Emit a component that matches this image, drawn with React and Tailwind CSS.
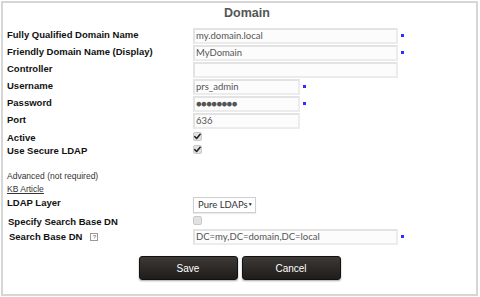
const label = "font-['Liberation_Sans',Arial,sans-serif] font-bold text-[9.5px] leading-[12px] text-[#111]";
const field = "h-[16px] bg-[#fcfcfc] border-2 border-[#e3e3e3] border-r-[#ececec] border-b-[#ececec] px-[1px] flex items-center font-['Lato',sans-serif] text-[9.5px] text-[#555] leading-none whitespace-nowrap";

function Req() {
  return <span className="ml-[3px] mt-[6px] w-[3px] h-[3px] bg-[#2f2fff] inline-block" />;
}

function Check({ on }) {
  return (
    <span className="w-[9px] h-[9px] rounded-[2px] bg-[#e2e2e2] border border-[#c9c9c9] flex items-center justify-center">
      {on && (
        <svg width="7" height="7" viewBox="0 0 8 8">
          <path d="M1 4.2 L3 6.3 L7 1.5" fill="none" stroke="#222" strokeWidth="1.8" strokeLinecap="round" strokeLinejoin="round" />
        </svg>
      )}
    </span>
  );
}

function Row({ name, h, children, className = "", labelClass = "" }) {
  return (
    <div className={`flex ${className}`} style={{ height: h }}>
      <div className={`w-[186px] shrink-0 ${label} ${labelClass}`}>{name}</div>
      <div className="flex items-start">{children}</div>
    </div>
  );
}

export default function App() {
  return (
    <div className="w-[480px] h-[297px] bg-white pl-[1px] pt-[1px]">
      <div className="w-[477px] h-[295px] border-2 border-[#d6d6d6] pl-[4px] flex flex-col">
        <div className="h-[25px] pl-[217px] pt-[2px] font-['Liberation_Sans',Arial,sans-serif] font-bold text-[12.5px] leading-[16px] text-[#555]">
          Domain
        </div>

        <Row name="Fully Qualified Domain Name" h={17} labelClass="pt-[1px]">
          <div className={`${field} w-[205px]`}>my.domain.local</div>
          <Req />
        </Row>
        <Row name="Friendly Domain Name (Display)" h={17} labelClass="pt-[1px]">
          <div className={`${field} w-[205px]`}>MyDomain</div>
          <Req />
        </Row>
        <Row name="Controller" h={17} labelClass="pt-[1px]">
          <div className={`${field} w-[205px]`}></div>
        </Row>
        <Row name="Username" h={17} labelClass="pt-[1px]">
          <div className={`${field} w-[107px]`}>prs_admin</div>
          <Req />
        </Row>
        <Row name="Password" h={17} labelClass="pt-[1px]">
          <div className={`${field} w-[107px] text-[#111] text-[8px] tracking-[-0.6px]`}>●●●●●●●●</div>
          <Req />
        </Row>
        <Row name="Port" h={17} labelClass="pt-[1px]">
          <div className={`${field} w-[107px]`}>636</div>
        </Row>
        <Row name="Active" h={13} className="pt-[2px]">
          <Check on />
        </Row>
        <Row name="Use Secure LDAP" h={14} className="pt-[2px]">
          <Check on />
        </Row>

        <div className="h-[13px]" />
        <div className="h-[13px] font-['Liberation_Sans',Arial,sans-serif] text-[8.5px] leading-[13px] text-[#333]">
          Advanced (not required)
        </div>
        <div className="h-[13px] font-['Liberation_Sans',Arial,sans-serif] text-[8.5px] leading-[13px] text-[#333]">
          <span className="underline">KB Article</span>
        </div>

        <Row name="LDAP Layer" h={18} className="pt-[1px]">
          <div className="h-[16px] w-[63px] bg-white border border-[#cfcfcf] shadow-[0_1px_1px_rgba(0,0,0,0.08)] flex items-center justify-between px-[4px] font-['Lato',sans-serif] text-[9.5px] text-[#333] whitespace-nowrap">
            <span>Pure LDAPs</span>
            <span className="text-[5px] text-[#222]">▼</span>
          </div>
        </Row>
        <Row name="Specify Search Base DN" h={14} className="pt-[2px]" labelClass="pl-[1px]">
          <Check />
        </Row>
        <Row name="" h={19} className="pt-[1px]">
          <div className={`${field} w-[205px]`}>DC=my,DC=domain,DC=local</div>
          <Req />
        </Row>
        <div className="-mt-[19px] h-[19px] pl-[2px] pt-[3px] flex items-start">
          <span className={label}>Search Base DN</span>
          <span className="ml-[8px] mt-[2px] w-[8px] h-[8px] border border-[#999] flex items-center justify-center font-['Liberation_Sans',Arial,sans-serif] text-[6px] leading-none text-[#666]">?</span>
        </div>

        <div className="mt-[9px] flex justify-center gap-[4px] pr-[4px]">
          <button className="w-[99px] h-[24px] rounded-[3px] bg-gradient-to-b from-[#3d3936] to-[#1f1c1a] border border-[#111] shadow-[0_1px_2px_rgba(0,0,0,0.35)] text-white font-['Liberation_Sans',Arial,sans-serif] text-[10px]">
            Save
          </button>
          <button className="w-[99px] h-[24px] rounded-[3px] bg-gradient-to-b from-[#3d3936] to-[#1f1c1a] border border-[#111] shadow-[0_1px_2px_rgba(0,0,0,0.35)] text-white font-['Liberation_Sans',Arial,sans-serif] text-[10px]">
            Cancel
          </button>
        </div>
      </div>
    </div>
  );
}
